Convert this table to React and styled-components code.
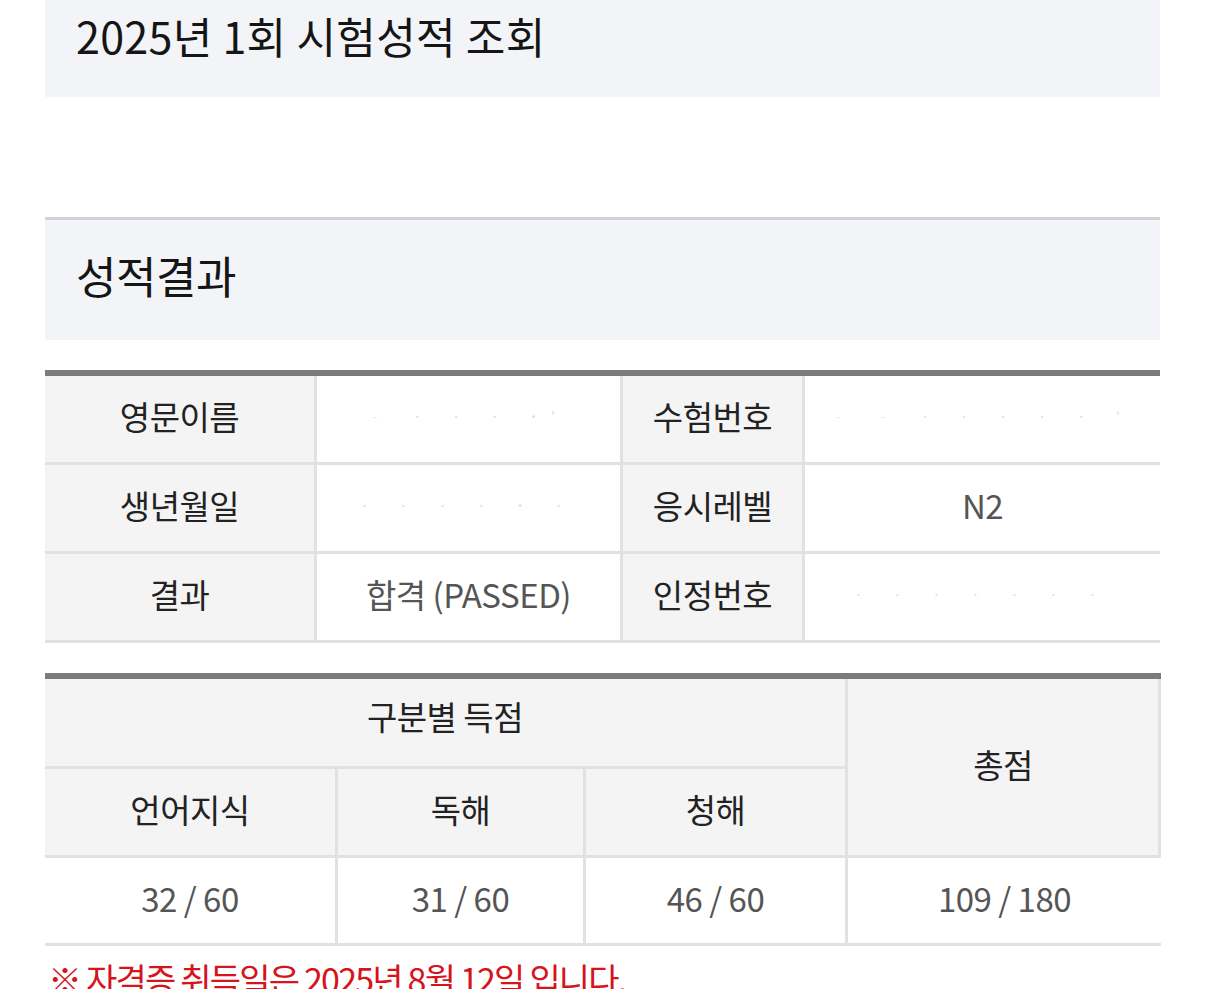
import React from "react";
import styled, { createGlobalStyle } from "styled-components";

const Global = createGlobalStyle`
  html, body { margin: 0; padding: 0; background: #fff; }
  body {
    font-family: "Noto Sans CJK KR", "Noto Sans", sans-serif;
    color: #222;
  }
`;

const Page = styled.div`
  width: 1116px;
  margin-left: 45px;
  display: flex;
  flex-direction: column;
`;

const TitleBox = styled.div`
  height: 97px;
  background: #f3f4f8;
  display: flex;
  align-items: center;
  padding-left: 31px;
  padding-bottom: 28px;
  box-sizing: border-box;
  width: 1115px;
`;

const PageTitle = styled.h1`
  margin: 0;
  font-size: 43px;
  font-weight: 400;
  letter-spacing: 0.3px;
  color: #151515;
`;

const SectionBox = styled.div`
  margin-top: 120px;
  height: 123px;
  border-top: 3px solid #d2d3d7;
  background: #f3f4f8;
  display: flex;
  align-items: center;
  padding-left: 31px;
  padding-bottom: 10px;
  box-sizing: border-box;
  width: 1115px;
`;

const SectionTitle = styled.h2`
  margin: 0;
  font-size: 44px;
  font-weight: 400;
  letter-spacing: -0.5px;
  color: #151515;
`;

const InfoGrid = styled.div`
  margin-top: 30px;
  width: 1115px;
  display: grid;
  grid-template-columns: 269px 303px 179px 355px;
  grid-auto-rows: 86px;
  gap: 3px;
  background: #e1e1e1;
  border-top: 6px solid #7b7b7b;
  border-bottom: 3px solid #e1e1e1;
`;

const ScoreGrid = styled.div`
  margin-top: 30px;
  width: 1116px;
  display: grid;
  grid-template-columns: 290px 245px 259px 313px;
  grid-template-rows: 87px 86px 85px;
  gap: 3px;
  background: #e1e1e1;
  border-top: 6px solid #7b7b7b;
  border-bottom: 3px solid #e1e1e1;
`;

const Cell = styled.div`
  background: ${(p) => (p.$head ? "#f5f4f5" : "#fff")};
  color: ${(p) => (p.$head ? "#222" : "#555")};
  display: flex;
  align-items: center;
  justify-content: center;
  font-size: 33px;
  letter-spacing: -0.5px;
  grid-column: ${(p) => p.$col || "auto"};
  grid-row: ${(p) => p.$row || "auto"};
  box-sizing: border-box;
  border-right: ${(p) => (p.$edge ? "3px solid #e1e1e1" : "none")};
  padding-bottom: ${(p) => (p.$shift ? "14px" : "6px")};
`;

const Masked = styled.span`
  color: #ddd;
  font-size: 14px;
  letter-spacing: 14px;
`;

const Notice = styled.p`
  margin: 8px 0 0 3px;
  color: #d5141b;
  font-size: 34px;
  letter-spacing: -1.8px;
  white-space: nowrap;
`;

export default function App() {
  return (
    <>
      <Global />
      <Page>
        <TitleBox>
          <PageTitle>2025년 1회 시험성적 조회</PageTitle>
        </TitleBox>
        <SectionBox>
          <SectionTitle>성적결과</SectionTitle>
        </SectionBox>
        <InfoGrid>
          <Cell $head>영문이름</Cell>
          <Cell><Masked>‐ · · · ˙'</Masked></Cell>
          <Cell $head>수험번호</Cell>
          <Cell><Masked>‐ ‐ · · · · · ‘</Masked></Cell>
          <Cell $head>생년월일</Cell>
          <Cell><Masked>· · · · ˙ ·</Masked></Cell>
          <Cell $head>응시레벨</Cell>
          <Cell>N2</Cell>
          <Cell $head>결과</Cell>
          <Cell>합격 (PASSED)</Cell>
          <Cell $head>인정번호</Cell>
          <Cell><Masked>· · · · · · ·</Masked></Cell>
        </InfoGrid>
        <ScoreGrid>
          <Cell $head $col="1 / 4" $row="1" $shift>구분별 득점</Cell>
          <Cell $head $col="4" $row="1 / 3" $edge>총점</Cell>
          <Cell $head>언어지식</Cell>
          <Cell $head>독해</Cell>
          <Cell $head>청해</Cell>
          <Cell>32 / 60</Cell>
          <Cell>31 / 60</Cell>
          <Cell>46 / 60</Cell>
          <Cell>109 / 180</Cell>
        </ScoreGrid>
        <Notice>※ 자격증 취득일은 2025년 8월 12일 입니다.</Notice>
      </Page>
    </>
  );
}
